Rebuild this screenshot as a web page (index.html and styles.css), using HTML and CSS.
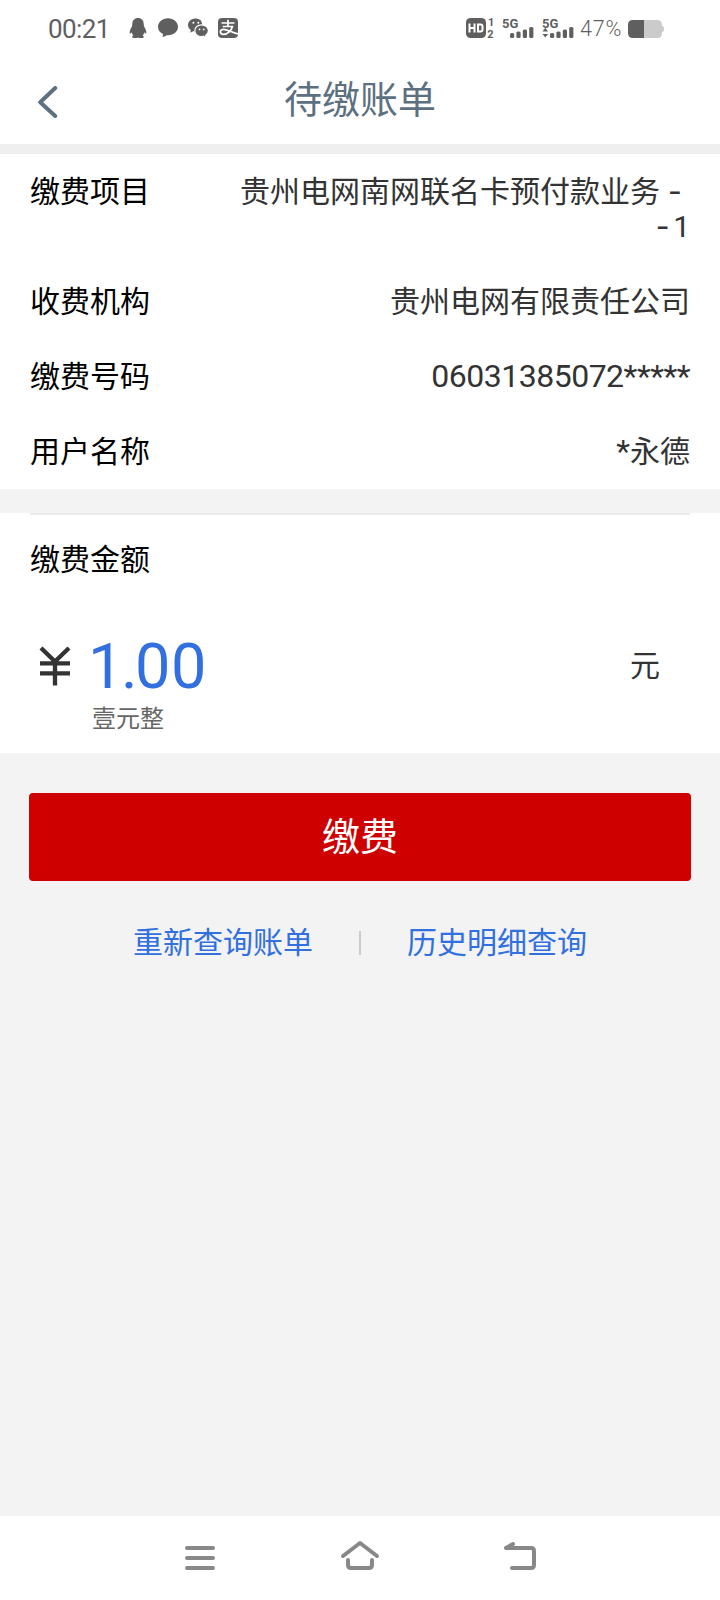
FILE: index.html
```html
<!DOCTYPE html>
<html lang="zh-CN">
<head>
<meta charset="utf-8">
<title>待缴账单</title>
<link rel="stylesheet" href="styles.css">
</head>
<body>
<div class="screen">
  <div class="status">
    <span class="time">00:21</span>
    <div class="apps">
      <svg width="20" height="20" viewBox="0 0 20 20"><path fill="#5f5f5f" d="M10 0C6.500 0 4.300 2.500 4.300 6L4 8.500C2.600 10.500 1.500 13 1.700 15.300C2.200 16 3 15.200 3.600 14.200C3.900 15.500 4.500 16.600 5.300 17.400C3.500 18.300 3.800 20 6 20H9L10 19.400L11 20H14C16.200 20 16.500 18.300 14.700 17.400C15.500 16.600 16.100 15.500 16.400 14.200C17 15.200 17.800 16 18.300 15.300C18.500 13 17.400 10.500 16 8.500L15.700 6C15.700 2.500 13.500 0 10 0Z"/></svg>
      <svg width="20" height="20" viewBox="0 0 20 20"><path fill="#5f5f5f" d="M10 .2C4.500.2 0 3.900 0 8.700C0 12 2 14.700 5 16.100L4.600 19.300L9 17.200C15.500 17.500 20 13.700 20 8.700C20 3.900 15.500.2 10 .2Z"/></svg>
      <svg width="20" height="20" viewBox="0 0 20 20"><path fill="#5f5f5f" d="M7.700.4C3.400.4 0 3.300 0 6.900C0 9 1.100 10.800 2.800 12L2.200 14.700L5.200 13.200L7.500 13.500Z"/><circle cx="8" cy="6.700" r="6.300" fill="#5f5f5f"/><path fill="#5f5f5f" stroke="#fff" stroke-width="1.200" d="M13.500 6.800C9.700 6.800 6.800 9.400 6.800 12.700C6.800 16 9.800 18.500 13.500 18.500L15.500 18.200L18.200 19.800L17.700 17.200C19.300 16.100 20.400 14.500 20.400 12.700C20.400 9.400 17.300 6.800 13.500 6.800Z"/><g fill="#fff"><circle cx="5.400" cy="4.800" r="1"/><circle cx="10.300" cy="4.800" r="1"/><circle cx="11.500" cy="11.400" r=".9"/><circle cx="15.700" cy="11.400" r=".9"/></g></svg>
      <svg width="20" height="20" viewBox="0 0 20 20"><rect width="20" height="20" rx="4" fill="#5f5f5f"/><g fill="none" stroke="#fff" stroke-width="1.700"><path d="M3.500 5H16.500M10 1.700V8.300M4.700 8.500H14.400C13.600 12.500 9.600 16.400 5.600 16.400C1.300 16.400 1.300 11.300 5.500 11.300C9.500 11.300 14 14.800 20 15.800"/></g></svg>
    </div>
    <div class="signals">
      <svg class="hd" width="30" height="20" viewBox="0 0 30 20"><rect width="20" height="20" rx="4.500" fill="#5f5f5f"/><g fill="none" stroke="#fff" stroke-width="2"><path d="M3.500 5.500V14.500M8.500 5.500V14.500M3.500 10H8.500M12 6.400H14.500Q16.500 6.400 16.500 8.400V11.600Q16.500 13.600 14.500 13.600H12Z"/></g><g class="tiny"><text x="22" y="8">1</text><text x="21.300" y="19.500">2</text></g></svg>
      <svg class="cell" width="32" height="20" viewBox="0 0 32 20"><text class="fiveg" x="0" y="9.500">5G</text><g fill="#5f5f5f"><rect x="8" y="15" width="4.200" height="5" rx="1.500"/><rect x="14.400" y="13.500" width="4.200" height="6.500" rx="1.500"/><rect x="20.800" y="11.500" width="4.200" height="8.500" rx="1.500"/><rect x="27.200" y="9" width="4.200" height="11" rx="1.500"/></g></svg>
      <svg class="cell second" width="32" height="20" viewBox="0 0 32 20"><text class="fiveg" x="0" y="9.500">5G</text><path fill="#5f5f5f" d="M.5 13.500L3.300 9.700L6.100 13.500ZM.5 16H6.100L3.300 19.500Z"/><g fill="#5f5f5f"><rect x="8" y="15" width="4.200" height="5" rx="1.500"/><rect x="14.400" y="13.500" width="4.200" height="6.500" rx="1.500"/><rect x="20.800" y="11.500" width="4.200" height="8.500" rx="1.500"/><rect x="27.200" y="9" width="4.200" height="11" rx="1.500"/></g></svg>
      <span class="percent">47%</span>
      <svg class="battery" width="36" height="18" viewBox="0 0 36 18"><path fill="#cbcbcb" d="M16 0H29Q34 0 34 5V6Q36 6 36 9Q36 12 34 12V13Q34 18 29 18H16Z"/><path fill="#5f5f5f" d="M5 0H16V18H5Q0 18 0 13V5Q0 0 5 0Z"/></svg>
    </div>
  </div>
  <header class="header">
    <svg class="back" width="20" height="32" viewBox="0 0 20 32"><path d="M17.200 2L2.200 16.200L17.200 30" fill="none" stroke="#5c7080" stroke-width="4" stroke-linecap="round" stroke-linejoin="round"/></svg>
    <h1 class="title">待缴账单</h1>
  </header>
  <section class="details">
    <div class="row"><span class="label">缴费项目</span><span class="value">贵州电网南网联名卡预付款业务<span class="dash first">-</span><br><span class="dash">-</span><span class="one">1</span></span></div>
    <div class="row"><span class="label">收费机构</span><span class="value">贵州电网有限责任公司</span></div>
    <div class="row"><span class="label">缴费号码</span><span class="value number">06031385072*****</span></div>
    <div class="row"><span class="label">用户名称</span><span class="value"><span class="star">*</span>永德</span></div>
  </section>
  <section class="amount">
    <div class="label">缴费金额</div>
    <div class="sum">
      <svg class="yen" width="32" height="40" viewBox="0 0 32 40"><path d="M2 2L16 15.500L30 2M16 15V39.500M1 17.300H31M1 27.300H31" fill="none" stroke="#333" stroke-width="4.300"/></svg>
      <span class="figure"><span class="whole">1.</span>00</span>
      <span class="unit">元</span>
    </div>
    <div class="words">壹元整</div>
  </section>
  <main class="actions">
    <button class="pay">缴费</button>
    <div class="links"><a>重新查询账单</a><span class="divider"></span><a>历史明细查询</a></div>
  </main>
  <nav class="nav">
    <svg width="40" height="32" viewBox="0 0 40 32"><path d="M7 8H33M7 18H33M7 28H33"/></svg>
    <svg width="40" height="32" viewBox="0 0 40 32"><path d="M3 16L20 3L37 16M8 20V25Q8 28 11 28H29Q32 28 32 25V20"/></svg>
    <svg width="40" height="32" viewBox="0 0 40 32"><path d="M13 4L6 8H31Q34 8 34 11V25Q34 28 31 28H12"/></svg>
  </nav>
</div>
</body>
</html>
```

FILE: styles.css
```css
* { box-sizing: border-box; }
body { margin: 0; font-family: Roboto, "Noto Sans CJK SC", sans-serif; font-size: 30px; line-height: 35px; color: #333; }
.screen { display: flex; flex-direction: column; width: 720px; height: 1600px; background: #f3f3f3; }
.status { display: flex; align-items: center; height: 56px; padding: 0 56px 0 48px; background: #fff; color: #5f5f5f; }
.time { width: 80px; font-size: 26px; line-height: 30px; letter-spacing: -.6px; padding-top: 2px; }
.apps { display: flex; gap: 10px; }
.signals { display: flex; align-items: center; margin-left: auto; }
.signals svg { flex: none; overflow: visible; }
.hd { margin-right: 6px; }
.cell { margin-right: 8px; }
.second { margin-right: 6px; }
.tiny { font: 700 11px Roboto, sans-serif; fill: #5f5f5f; }
.fiveg { font: 700 13px Roboto, sans-serif; fill: #5f5f5f; }
.percent { width: 48px; font-size: 21.500px; line-height: 24px; font-weight: 300; padding-top: 2px; letter-spacing: .8px; }
.battery { margin-top: 2px; }
.header { display: grid; grid-template-columns: 60px 1fr 60px; align-items: center; height: 88px; background: #fff; }
.back { justify-self: end; margin: 4px 2px 0 0; }
.title { margin: 0; font-size: 38px; line-height: 44px; font-weight: 400; text-align: center; color: #5c7080; }
.details { margin-top: 10px; background: #fff; box-shadow: 0 -10px 0 #efefef; }
.row { display: flex; justify-content: space-between; padding: 20px 30px; }
.label { color: #000; }
.value { text-align: right; }
.dash { display: inline-block; width: 21px; line-height: 30px; text-align: center; font-family: Inter, sans-serif; }
.first { width: 30px; }
.number { font-size: 32px; letter-spacing: -.5px; }
.star { font-size: 32px; line-height: 30px; }
.amount { height: 240px; margin-top: 24px; padding: 0 30px; background: #fff; }
.amount .label { border-top: 2px solid #ebebeb; padding-top: 27px; }
.sum { display: flex; align-items: center; height: 78px; margin-top: 49px; padding: 0 30px 0 9px; margin-bottom: -2px; }
.yen { margin-right: 17px; margin-top: 1px; }
.figure { color: #326fdf; font-size: 63px; line-height: 78px; padding-top: 3px; letter-spacing: .6px; }
.whole { letter-spacing: -2.500px; }
.unit { margin-left: auto; }
.words { padding-left: 62px; font-size: 24px; line-height: 34px; color: #666; }
.actions { flex: 1; padding: 40px 29px 0; }
.pay { display: block; width: 100%; height: 88px; padding: 0 0 7px; border: 0; border-radius: 4px; background: #ce0000; color: #fff; font: 38px "Noto Sans CJK SC", sans-serif; }
.links { display: flex; justify-content: center; align-items: center; gap: 46px; margin-top: 44px; color: #326fdf; }
.divider { width: 2px; height: 24px; background: #ccc; }
.nav { display: flex; justify-content: center; gap: 120px; height: 84px; padding-top: 24px; background: #fff; }
.nav path { fill: none; stroke: #888; stroke-width: 4; stroke-linecap: round; stroke-linejoin: round; }
```
